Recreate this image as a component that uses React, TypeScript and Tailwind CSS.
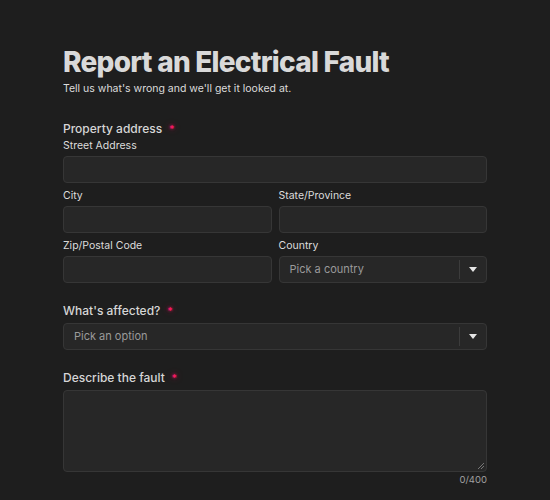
const Req = () => (
  <span className="ml-[7px] text-[10px] leading-[10px] text-[#ff1a66] [text-shadow:0_0_3px_#e0155f,0_0_6px_#a0103f]">*</span>
)

const Input = () => (
  <div className="h-[27px] w-full rounded-[4px] border border-[#363636] bg-[#272727]" />
)

const Select = ({ placeholder }: { placeholder: string }) => (
  <div className="flex h-[27px] w-full items-center rounded-[4px] border border-[#363636] bg-[#272727]">
    <span className="flex-1 pl-[10px] text-[11px] text-[#9a9a9a]">{placeholder}</span>
    <span className="h-[19px] w-px bg-[#3c3c3c]" />
    <span className="flex w-[26px] justify-center">
      <svg width="8" height="5" viewBox="0 0 8 5">
        <path d="M0 0h8L4 5z" fill="#e5e5e5" />
      </svg>
    </span>
  </div>
)

const Sub = ({ children }: { children: string }) => (
  <div className="mb-[2px] text-[10.5px] leading-[16px] text-[#dcdcdc]">{children}</div>
)

const Label = ({ children }: { children: string }) => (
  <div className="flex items-center text-[12px] font-medium leading-[18px] text-[#d6d6d6]">
    {children} <Req />
  </div>
)

const App = () => {
  return (
    <div className="min-h-[500px] w-full bg-[#1e1e1e] font-['Inter',sans-serif]">
      <div className="mx-auto w-[424px] pt-[45px]">
        <h1 className="text-[28px] font-extrabold leading-[34px] tracking-[-0.75px] text-[#d9d9d9]">
          Report an Electrical Fault
        </h1>
        <p className="mt-[2px] text-[10.5px] leading-[16px] text-[#dcdcdc]">
          Tell us what's wrong and we'll get it looked at.
        </p>

        <div className="mt-[23px]">
          <Label>Property address</Label>
        </div>
        <div>
          <Sub>Street Address</Sub>
          <Input />
        </div>
        <div className="mt-[5px] grid grid-cols-2 gap-x-[7px] gap-y-[5px]">
          <div>
            <Sub>City</Sub>
            <Input />
          </div>
          <div>
            <Sub>State/Province</Sub>
            <Input />
          </div>
          <div>
            <Sub>Zip/Postal Code</Sub>
            <Input />
          </div>
          <div>
            <Sub>Country</Sub>
            <Select placeholder="Pick a country" />
          </div>
        </div>

        <div className="mt-[19px]">
          <Label>What's affected?</Label>
        </div>
        <div className="mt-[3px]">
          <Select placeholder="Pick an option" />
        </div>

        <div className="mt-[19px]">
          <Label>Describe the fault</Label>
        </div>
        <div className="relative mt-[3px] h-[82px] w-full rounded-[4px] border border-[#363636] bg-[#272727]">
          <svg className="absolute bottom-[2px] right-[2px]" width="6" height="6" viewBox="0 0 6 6">
            <path d="M6 0L0 6M6 3L3 6" stroke="#8a8a8a" strokeWidth="0.8" />
          </svg>
        </div>
        <div className="mt-[2px] text-right text-[9.5px] leading-[12px] text-[#a0a0a0]">0/400</div>
      </div>
    </div>
  )
}

export default App
